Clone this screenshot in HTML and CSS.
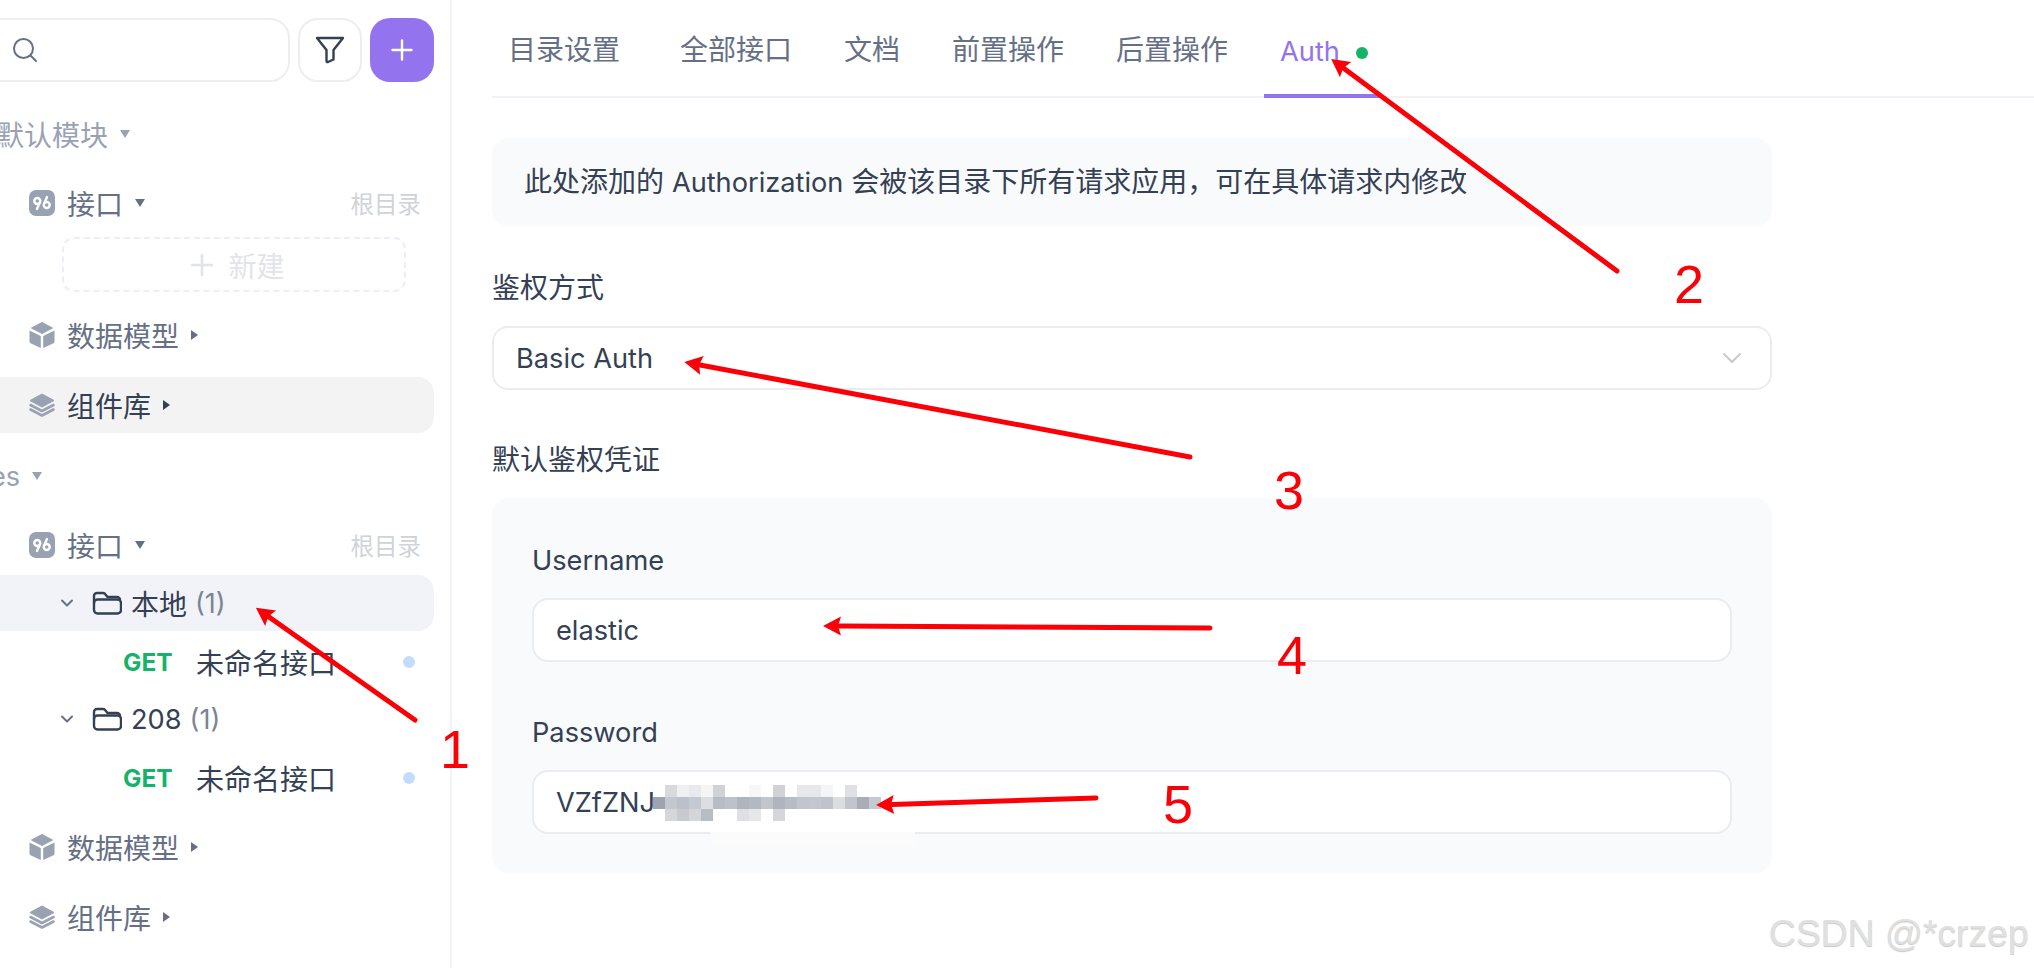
FILE: index.html
```html
<!DOCTYPE html>
<html lang="zh-CN">
<head>
    <meta charset="UTF-8">
    <title>Auth</title>
    <link rel="stylesheet" href="styles.css">
</head>
<body>
    <svg width="0" height="0" class="defs">
        <defs>
            <symbol id="i-api" viewBox="0 0 26 26">
                <rect width="26" height="26" rx="7" fill="#98a2b3"/>
                <circle cx="8.300" cy="11" r="3" fill="none" stroke="#fff" stroke-width="2.400"/>
                <path d="M10.800 12.500 8 19" stroke="#fff" stroke-width="2.400" stroke-linecap="round"/>
                <circle cx="17.700" cy="15" r="3" fill="none" stroke="#fff" stroke-width="2.400"/>
                <path d="M15.200 13.500 18 7" stroke="#fff" stroke-width="2.400" stroke-linecap="round"/>
            </symbol>
            <symbol id="i-cube" viewBox="0 0 26 28">
                <path d="M13 1.500 23.500 7 13 12.500 2.500 7Z" fill="#98a2b3" stroke="#98a2b3" stroke-linejoin="round"/>
                <path d="M.5 9.500 11.800 15v12L2 22.500a2.500 2.500 0 0 1-1.500-2.300Z" fill="#98a2b3"/>
                <path d="M25.500 9.500 14.200 15v12l9.800-4.500a2.500 2.500 0 0 0 1.500-2.300Z" fill="#98a2b3"/>
            </symbol>
            <symbol id="i-stack" viewBox="0 0 26 24">
                <path d="M13 1 25 7.500 13 14 1 7.500Z" fill="#98a2b3" stroke="#98a2b3" stroke-linejoin="round"/>
                <path d="M1.500 12 13 18 24.500 12" fill="none" stroke="#98a2b3" stroke-width="2.600" stroke-linecap="round" stroke-linejoin="round"/>
                <path d="M1.500 16.500 13 22.500 24.500 16.500" fill="none" stroke="#98a2b3" stroke-width="2.600" stroke-linecap="round" stroke-linejoin="round"/>
            </symbol>
            <symbol id="i-folder" viewBox="0 0 30 24">
                <path d="M2 12V5a3 3 0 0 1 3-3h6a3 3 0 0 1 2.500 1.400L15.500 6H25a3 3 0 0 1 3 3" fill="none" stroke="#344054" stroke-width="2.400" stroke-linecap="round" stroke-linejoin="round"/>
                <rect x="2" y="8.500" width="27" height="14" rx="3.500" fill="none" stroke="#344054" stroke-width="2.400"/>
            </symbol>
            <symbol id="i-chev" viewBox="0 0 14 10">
                <path d="M2 2.500 7 7.500 12 2.500" fill="none" stroke="#667085" stroke-width="2" stroke-linecap="round" stroke-linejoin="round"/>
            </symbol>
            <marker id="head" markerUnits="userSpaceOnUse" markerWidth="40" markerHeight="40" refX="20" refY="20" orient="auto" viewBox="0 0 40 40">
                <path d="M36 20 18 10.500 21 20 18 29.500Z" fill="#fb0007"/>
            </marker>
        </defs>
    </svg>

    <div class="layout">
        <aside class="sidebar">
            <div class="search-row">
                <div class="search-box">
                    <svg class="search-icon" width="26" height="26" viewBox="0 0 26 26"><circle cx="11.500" cy="11.500" r="9.500" fill="none" stroke="#667085" stroke-width="2"/><path d="M18.500 18.500 24 24" stroke="#667085" stroke-width="2" stroke-linecap="round"/></svg>
                </div>
                <div class="filter-btn">
                    <svg width="30" height="28" viewBox="0 0 30 28"><path d="M2 2h26l-9.500 12v9.500L13 26a1 1 0 0 1-1.500-1V14Z" fill="none" stroke="#344054" stroke-width="2.400" stroke-linejoin="round"/></svg>
                </div>
                <div class="add-btn">
                    <svg width="22" height="22" viewBox="0 0 22 22"><path d="M11 1.500v19M1.500 11h19" stroke="#fff" stroke-width="2.400" stroke-linecap="round"/></svg>
                </div>
            </div>

            <div class="section first"><span class="cut">默认模块</span><i class="caret-down light"></i></div>
            <div class="row group">
                <svg class="row-icon"><use href="#i-api"/></svg>
                <span class="dim">接口</span><i class="caret-down"></i>
                <span class="root-label">根目录</span>
            </div>
            <div class="new-box">
                <svg class="new-plus" width="22" height="22" viewBox="0 0 22 22"><path d="M11 1v20M1 11h20" stroke="#e2e4e8" stroke-width="2.600" stroke-linecap="round"/></svg>
                新建
            </div>
            <div class="row group">
                <svg class="row-icon"><use href="#i-cube"/></svg>
                <span class="dim">数据模型</span><i class="caret-right"></i>
            </div>
            <div class="row group selected">
                <svg class="row-icon"><use href="#i-stack"/></svg>
                <span>组件库</span><i class="caret-right dark"></i>
            </div>

            <div class="section"><span class="cut-en">es</span><i class="caret-down light"></i></div>
            <div class="row group">
                <svg class="row-icon"><use href="#i-api"/></svg>
                <span class="dim">接口</span><i class="caret-down"></i>
                <span class="root-label">根目录</span>
            </div>
            <div class="row folder open">
                <svg class="chev"><use href="#i-chev"/></svg>
                <svg class="folder-icon"><use href="#i-folder"/></svg>
                <span>本地</span><span class="count">(1)</span>
            </div>
            <div class="row api">
                <span class="method">GET</span><span>未命名接口</span><i class="dot"></i>
            </div>
            <div class="row folder">
                <svg class="chev"><use href="#i-chev"/></svg>
                <svg class="folder-icon"><use href="#i-folder"/></svg>
                <span class="latin">208</span><span class="count">(1)</span>
            </div>
            <div class="row api">
                <span class="method">GET</span><span>未命名接口</span><i class="dot"></i>
            </div>
            <div class="row group">
                <svg class="row-icon"><use href="#i-cube"/></svg>
                <span class="dim">数据模型</span><i class="caret-right"></i>
            </div>
            <div class="row group">
                <svg class="row-icon"><use href="#i-stack"/></svg>
                <span class="dim">组件库</span><i class="caret-right"></i>
            </div>
        </aside>

        <main class="main">
            <div class="tabs">
                <div class="tab">目录设置</div>
                <div class="tab">全部接口</div>
                <div class="tab">文档</div>
                <div class="tab">前置操作</div>
                <div class="tab">后置操作</div>
                <div class="tab current"><span class="latin">Auth</span><i class="tab-dot"></i></div>
            </div>

            <div class="content">
                <div class="notice">此处添加的 <span class="latin">Authorization</span> 会被该目录下所有请求应用，可在具体请求内修改</div>

                <div class="label auth-label">鉴权方式</div>
                <div class="field select">
                    <span class="latin">Basic Auth</span>
                    <svg width="20" height="12" viewBox="0 0 20 12"><path d="M2 2 10 10 18 2" fill="none" stroke="#c6c9ce" stroke-width="2" stroke-linecap="round" stroke-linejoin="round"/></svg>
                </div>

                <div class="label cred-label">默认鉴权凭证</div>
                <div class="card">
                    <div class="label latin">Username</div>
                    <div class="field"><span class="latin">elastic</span></div>
                    <div class="label latin pass-label">Password</div>
                    <div class="field"><span class="latin">VZfZNJ</span></div>
                </div>
            </div>
        </main>
    </div>

    <!-- annotations drawn over the screenshot -->
    <svg class="marks" width="2034" height="968" viewBox="0 0 2034 968">
        <g>
            <rect x="710" y="832" width="205" height="13" fill="#fbfbfc"/>
            <rect x="665" y="785" width="12" height="12" fill="#d8d9dc"/>
            <rect x="677" y="785" width="12" height="12" fill="#f0f0f2"/>
            <rect x="689" y="785" width="12" height="12" fill="#e8e9ec"/>
            <rect x="701" y="785" width="12" height="12" fill="#f5f5f6"/>
            <rect x="713" y="785" width="12" height="12" fill="#d0d2d6"/>
            <rect x="749" y="785" width="12" height="12" fill="#f7f7f8"/>
            <rect x="773" y="785" width="12" height="12" fill="#d0d2d6"/>
            <rect x="797" y="785" width="12" height="12" fill="#e8e8ec"/>
            <rect x="809" y="785" width="12" height="12" fill="#e8e8ec"/>
            <rect x="821" y="785" width="12" height="12" fill="#f5f5f7"/>
            <rect x="845" y="785" width="12" height="12" fill="#dfe0e4"/>
            <rect x="653" y="797" width="12" height="12" fill="#9ea3ae"/>
            <rect x="665" y="797" width="12" height="12" fill="#c4c7d0"/>
            <rect x="677" y="797" width="12" height="12" fill="#bcc0ca"/>
            <rect x="689" y="797" width="12" height="12" fill="#c4c8d0"/>
            <rect x="701" y="797" width="12" height="12" fill="#dddee2"/>
            <rect x="713" y="797" width="12" height="12" fill="#b8bcc6"/>
            <rect x="725" y="797" width="12" height="12" fill="#bdc1ca"/>
            <rect x="737" y="797" width="12" height="12" fill="#b0b4be"/>
            <rect x="749" y="797" width="12" height="12" fill="#b4b8c2"/>
            <rect x="761" y="797" width="12" height="12" fill="#c2c5ce"/>
            <rect x="773" y="797" width="12" height="12" fill="#b0b4be"/>
            <rect x="785" y="797" width="12" height="12" fill="#b8bcc5"/>
            <rect x="797" y="797" width="12" height="12" fill="#c2c5ce"/>
            <rect x="809" y="797" width="12" height="12" fill="#c4c7d0"/>
            <rect x="821" y="797" width="12" height="12" fill="#c0c3cc"/>
            <rect x="833" y="797" width="12" height="12" fill="#dcdde1"/>
            <rect x="845" y="797" width="12" height="12" fill="#c2c5ce"/>
            <rect x="857" y="797" width="12" height="12" fill="#a9adb6"/>
            <rect x="869" y="797" width="12" height="12" fill="#c6c9d2"/>
            <rect x="665" y="809" width="12" height="12" fill="#d4d6da"/>
            <rect x="677" y="809" width="12" height="12" fill="#c8cad0"/>
            <rect x="689" y="809" width="12" height="12" fill="#d4d6da"/>
            <rect x="701" y="809" width="12" height="12" fill="#b8bcc4"/>
            <rect x="737" y="809" width="12" height="12" fill="#dfe0e3"/>
            <rect x="749" y="809" width="12" height="12" fill="#e6e7e9"/>
            <rect x="773" y="809" width="12" height="12" fill="#d5d6da"/>
        </g>
        <g fill="none" stroke="#fb0007" stroke-width="5" stroke-linecap="round">
            <path d="M415 720 269 617" marker-end="url(#head)"/>
            <path d="M1617 271 1344 68.500" marker-end="url(#head)"/>
            <path d="M1190 457 700 365" marker-end="url(#head)"/>
            <path d="M1210 628 839 626" marker-end="url(#head)"/>
            <path d="M1096 798 892 804.500" marker-end="url(#head)"/>
        </g>
    </svg>
    <span class="num n1">1</span>
    <span class="num n2">2</span>
    <span class="num n3">3</span>
    <span class="num n4">4</span>
    <span class="num n5">5</span>
    <div class="watermark">CSDN @*crzep</div>
</body>
</html>
```

FILE: styles.css
```css
html, body {
    margin: 0;
    padding: 0;
    height: 968px;
    overflow: hidden;
    background: #fff;
}

body {
    position: relative;
    font-family: Inter, "Noto Sans CJK SC", sans-serif;
    font-size: 28px;
    color: #344054;
}

.latin {
    font-size: 27.200px;
}

.defs {
    position: absolute;
}

.layout {
    display: flex;
    height: 968px;
}

.sidebar {
    width: 452px;
    flex: none;
    box-sizing: border-box;
    border-right: 2px solid #f2f2f8;
    padding: 18px 16px 0 0;
    overflow: hidden;
}

.search-row {
    display: flex;
    gap: 8px;
    height: 64px;
}

.search-box {
    width: 310px;
    margin-left: -20px;
    box-sizing: border-box;
    border: 2px solid #eeeef2;
    border-radius: 20px;
    display: flex;
    align-items: center;
    padding-left: 30px;
}

.filter-btn, .add-btn {
    width: 64px;
    height: 64px;
    box-sizing: border-box;
    border-radius: 20px;
    display: flex;
    align-items: center;
    justify-content: center;
    flex: none;
}

.filter-btn {
    border: 2px solid #eeeef2;
}

.add-btn {
    background: #9373ee;
}

.row, .section {
    display: flex;
    align-items: center;
    height: 56px;
    box-sizing: border-box;
    border-radius: 16px;
}

.section {
    color: #98a2b3;
    margin-top: 15px;
}

.section.first {
    margin-top: 24px;
}

.cut {
    margin-left: -4px;
}

.cut-en {
    margin-left: -10px;
    font-size: 27.200px;
}

.group {
    padding-right: 13px;
    margin-top: 14px;
    margin-left: -20px;
    padding-left: 49px;
}

.section + .group {
    margin-top: 13px;
}

.api + .group {
    margin-top: 13px;
}

.row-icon {
    width: 26px;
    height: 28px;
    margin-right: 12px;
    flex: none;
}

.dim {
    color: #667085;
}

.caret-down {
    display: inline-block;
    width: 0;
    height: 0;
    margin-left: 12px;
    border-left: 5px solid transparent;
    border-right: 5px solid transparent;
    border-top: 8px solid #667085;
}

.caret-down.light {
    border-top-color: #98a2b3;
    margin-left: 12px;
}

.caret-right {
    display: inline-block;
    width: 0;
    height: 0;
    margin-left: 12px;
    border-top: 5px solid transparent;
    border-bottom: 5px solid transparent;
    border-left: 7px solid #667085;
}

.caret-right.dark {
    border-left-color: #344054;
}

.root-label {
    margin-left: auto;
    font-size: 23.500px;
    color: #d0d3d8;
}

.selected {
    background: #f3f3f4;
}

.new-box {
    height: 55px;
    margin: 6px 28px 15px 62px;
    padding-left: 8px;
    box-sizing: border-box;
    border: 2px dashed #eeeefb;
    border-radius: 12px;
    display: flex;
    align-items: center;
    justify-content: center;
    color: #e2e4e8;
}

.new-box + .group {
    margin-top: 0;
}

.new-plus {
    margin-right: 15px;
}

.folder {
    margin-top: 1px;
    margin-left: -20px;
    padding-left: 80px;
}

.group + .folder {
    margin-top: 2px;
}

.open {
    background: #f2f3f8;
}

.chev {
    width: 14px;
    height: 10px;
    margin-right: 18px;
    flex: none;
}

.folder-icon {
    width: 30px;
    height: 24px;
    margin-right: 9px;
    flex: none;
}

.count {
    font-size: 27px;
    color: #7a8496;
    margin-left: 8px;
}

.api {
    margin-top: 3px;
    padding-left: 123px;
    padding-right: 19px;
}

.method {
    width: 73px;
    font-size: 24.500px;
    font-weight: 700;
    color: #14b368;
}

.dot {
    margin-left: auto;
    width: 12px;
    height: 12px;
    border-radius: 50%;
    background: #c4dcfb;
}

.main {
    flex: 1;
    padding-left: 40px;
    min-width: 0;
}

.tabs {
    display: flex;
    gap: 20px;
    height: 98px;
    box-sizing: border-box;
    border-bottom: 2px solid #f2f2f8;
}

.tab {
    height: 98px;
    box-sizing: border-box;
    padding: 31px 16px 0;
    line-height: 38px;
    color: #667085;
}

.tab:first-child {
    margin-right: 8px;
}

.tab.current {
    color: #9373ee;
    border-bottom: 4px solid #9373ee;
    padding-top: 32px;
    padding-right: 13px;
}

.tab-dot {
    display: inline-block;
    width: 12px;
    height: 12px;
    margin-left: 16px;
    border-radius: 50%;
    background: #14b368;
    vertical-align: 2px;
}

.content {
    width: 1280px;
}

.notice {
    margin-top: 40px;
    height: 88px;
    line-height: 88px;
    padding-left: 32px;
    border-radius: 16px;
    background: #f9fafb;
}

.label {
    line-height: 38px;
}

.auth-label {
    margin-top: 43px;
    margin-bottom: 19px;
}

.cred-label {
    margin-top: 51px;
    margin-bottom: 19px;
}

.field {
    height: 64px;
    box-sizing: border-box;
    border: 2px solid #ebecf0;
    border-radius: 16px;
    background: #fff;
    padding: 0 22px;
    display: flex;
    align-items: center;
    justify-content: space-between;
}

.select {
    padding-right: 28px;
}

.card {
    height: 375px;
    box-sizing: border-box;
    padding: 44px 40px 0;
    border-radius: 16px;
    background: #f9fafb;
}

.card .label {
    margin-bottom: 18px;
}

.card .pass-label {
    margin-top: 52px;
}

.marks {
    position: absolute;
    left: 0;
    top: 0;
}

.num {
    position: absolute;
    font-family: "Liberation Sans", sans-serif;
    font-size: 54px;
    line-height: 54px;
    color: #fb0007;
}

.n1 { left: 440px; top: 722px; }
.n2 { left: 1674px; top: 257px; }
.n3 { left: 1274px; top: 463px; }
.n4 { left: 1277px; top: 628px; }
.n5 { left: 1163px; top: 777px; }

.watermark {
    position: absolute;
    left: 1769px;
    top: 911px;
    font-family: "Liberation Sans", sans-serif;
    font-size: 37.300px;
    line-height: 44px;
    color: #e0e0e0;
    text-shadow: 0 1px 1px #c8c8c8;
}
```
